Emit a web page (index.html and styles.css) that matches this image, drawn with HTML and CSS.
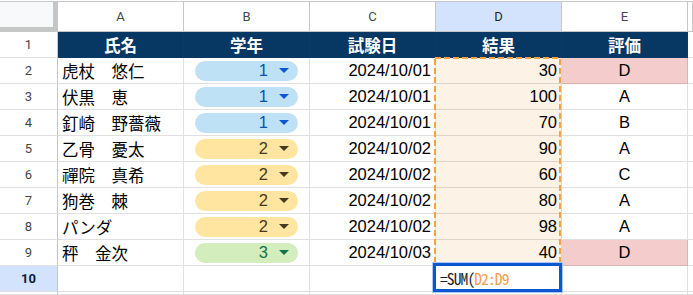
FILE: index.html
```html
<!DOCTYPE html>
<html lang="ja">
<head>
<meta charset="utf-8">
<title>Sheet</title>
<link rel="stylesheet" href="styles.css">
</head>
<body>
<div class="sheet">
  <div class="corner"></div>
  <div class="colhead">A</div>
  <div class="colhead">B</div>
  <div class="colhead">C</div>
  <div class="colhead active">D</div>
  <div class="colhead">E</div>
  <div class="colhead last"></div>

  <div class="rowhead">1</div>
  <div class="cell th">氏名</div>
  <div class="cell th">学年</div>
  <div class="cell th">試験日</div>
  <div class="cell th">結果</div>
  <div class="cell th">評価</div>
  <div class="cell"></div>

  <div class="rowhead">2</div>
  <div class="cell name">虎杖　悠仁</div>
  <div class="cell chipcell"><span class="chip blue">1<svg class="tri" viewBox="0 0 10 5"><polygon points="0,0 10,0 5,5"/></svg></span></div>
  <div class="cell num">2024/10/01</div>
  <div class="cell num res">30</div>
  <div class="cell grade bad">D</div>
  <div class="cell"></div>

  <div class="rowhead">3</div>
  <div class="cell name">伏黒　恵</div>
  <div class="cell chipcell"><span class="chip blue">1<svg class="tri" viewBox="0 0 10 5"><polygon points="0,0 10,0 5,5"/></svg></span></div>
  <div class="cell num">2024/10/01</div>
  <div class="cell num res">100</div>
  <div class="cell grade">A</div>
  <div class="cell"></div>

  <div class="rowhead">4</div>
  <div class="cell name">釘崎　野薔薇</div>
  <div class="cell chipcell"><span class="chip blue">1<svg class="tri" viewBox="0 0 10 5"><polygon points="0,0 10,0 5,5"/></svg></span></div>
  <div class="cell num">2024/10/01</div>
  <div class="cell num res">70</div>
  <div class="cell grade">B</div>
  <div class="cell"></div>

  <div class="rowhead">5</div>
  <div class="cell name">乙骨　憂太</div>
  <div class="cell chipcell"><span class="chip yellow">2<svg class="tri" viewBox="0 0 10 5"><polygon points="0,0 10,0 5,5"/></svg></span></div>
  <div class="cell num">2024/10/02</div>
  <div class="cell num res">90</div>
  <div class="cell grade">A</div>
  <div class="cell"></div>

  <div class="rowhead">6</div>
  <div class="cell name">禪院　真希</div>
  <div class="cell chipcell"><span class="chip yellow">2<svg class="tri" viewBox="0 0 10 5"><polygon points="0,0 10,0 5,5"/></svg></span></div>
  <div class="cell num">2024/10/02</div>
  <div class="cell num res">60</div>
  <div class="cell grade">C</div>
  <div class="cell"></div>

  <div class="rowhead">7</div>
  <div class="cell name">狗巻　棘</div>
  <div class="cell chipcell"><span class="chip yellow">2<svg class="tri" viewBox="0 0 10 5"><polygon points="0,0 10,0 5,5"/></svg></span></div>
  <div class="cell num">2024/10/02</div>
  <div class="cell num res">80</div>
  <div class="cell grade">A</div>
  <div class="cell"></div>

  <div class="rowhead">8</div>
  <div class="cell name">パンダ</div>
  <div class="cell chipcell"><span class="chip yellow">2<svg class="tri" viewBox="0 0 10 5"><polygon points="0,0 10,0 5,5"/></svg></span></div>
  <div class="cell num">2024/10/02</div>
  <div class="cell num res">98</div>
  <div class="cell grade">A</div>
  <div class="cell"></div>

  <div class="rowhead">9</div>
  <div class="cell name">秤　金次</div>
  <div class="cell chipcell"><span class="chip green">3<svg class="tri" viewBox="0 0 10 5"><polygon points="0,0 10,0 5,5"/></svg></span></div>
  <div class="cell num">2024/10/03</div>
  <div class="cell num res">40</div>
  <div class="cell grade bad">D</div>
  <div class="cell"></div>

  <div class="rowhead active">10</div>
  <div class="cell"></div>
  <div class="cell"></div>
  <div class="cell"></div>
  <div class="cell editcell"><div class="editor">=SUM(<span class="ref">D2:D9</span></div></div>
  <div class="cell"></div>
  <div class="cell"></div>

  <div class="rowhead"></div>
  <div class="cell"></div>
  <div class="cell"></div>
  <div class="cell"></div>
  <div class="cell"></div>
  <div class="cell"></div>
  <div class="cell"></div>

  <svg class="range" width="128" height="210" viewBox="0 0 128 210"><rect x="1" y="1" width="125" height="207" fill="none" stroke="#f5a243" stroke-width="2" stroke-dasharray="6 3"/></svg>
</div>
</body>
</html>
```

FILE: styles.css
```css
html, body {
  margin: 0;
  padding: 0;
  background: #ffffff;
  overflow: hidden;
}

.sheet {
  position: relative;
  margin-top: 1px;
  border-top: 1px solid #c7c7c7;
  width: 100vw;
  height: calc(100vh - 2px);
  overflow: hidden;
  display: grid;
  grid-template-columns: 58px repeat(5, 126px) minmax(0, 1fr);
  grid-template-rows: 30px repeat(10, 26px) minmax(0, 1fr);
  font-family: "Liberation Sans", "Noto Sans CJK JP", sans-serif;
  font-size: 16.5px;
  color: #000000;
}

.sheet > div {
  box-sizing: border-box;
  min-width: 0;
  min-height: 0;
}

.corner {
  background: #f8f9fa;
  border-right: 5px solid #c4c7c5;
  border-bottom: 5px solid #c4c7c5;
}

.colhead {
  display: flex;
  align-items: center;
  justify-content: center;
  font-family: Roboto, "Liberation Sans", sans-serif;
  font-size: 13px;
  color: #444746;
  background: #ffffff;
  border-right: 1px solid #c7c7c7;
  border-bottom: 1px solid #c7c7c7;
}

.colhead.active {
  background: #d3e3fd;
  color: #1f1f1f;
}

.rowhead {
  display: flex;
  align-items: center;
  justify-content: center;
  font-family: Roboto, "Liberation Sans", sans-serif;
  font-size: 13px;
  color: #444746;
  border-right: 1px solid #c4c7c5;
  border-bottom: 1px solid #e1e1e1;
}

.rowhead.active {
  background: #d3e3fd;
  color: #0b1d3a;
  font-weight: 700;
}

.cell {
  display: flex;
  align-items: center;
  padding: 0 4px;
  border-right: 1px solid rgba(0, 0, 0, 0.12);
  border-bottom: 1px solid rgba(0, 0, 0, 0.12);
  white-space: nowrap;
}

.th {
  background: #073763;
  color: #ffffff;
  font-weight: 700;
  justify-content: center;
  border-right-color: #0b3a66;
  border-bottom-color: #0b3a66;
}

.name {
  font-family: "Noto Sans CJK JP", sans-serif;
  padding-left: 4px;
}

.num {
  justify-content: flex-end;
}

.res {
  background: #fdf2e6;
}

.grade {
  justify-content: center;
}

.grade.bad {
  background: #f4cccc;
}

.chipcell {
  padding: 0 11px;
}

.chip {
  flex: 1;
  height: 20px;
  border-radius: 10px;
  display: flex;
  align-items: center;
  justify-content: flex-end;
  gap: 11px;
  padding-right: 9px;
}

.tri {
  width: 10px;
  height: 5px;
  display: block;
}

.chip.blue {
  background: #bfe1f6;
  color: #0a53a8;
}

.chip.blue .tri {
  fill: #0b57d0;
}

.chip.yellow {
  background: #ffe5a0;
  color: #473821;
}

.chip.yellow .tri {
  fill: #473821;
}

.chip.green {
  background: #d4edbc;
  color: #11734b;
}

.chip.green .tri {
  fill: #11734b;
}

.editcell {
  position: relative;
  overflow: visible;
}

.editor {
  position: absolute;
  left: -3px;
  top: -3px;
  right: -1px;
  bottom: -1px;
  border: 3px solid #0b57d0;
  box-shadow: 0 0 0 1px #a8c7fa;
  background: #ffffff;
  display: flex;
  align-items: center;
  padding-left: 4px;
  font-family: "Noto Sans Mono CJK JP", "DejaVu Sans Mono", monospace;
  font-size: 15.5px;
  letter-spacing: -0.9px;
  color: #1f1f1f;
  z-index: 2;
}

.ref {
  color: #f29e4c;
}

.range {
  position: absolute;
  left: 434px;
  top: 55px;
  z-index: 1;
  pointer-events: none;
}
```
